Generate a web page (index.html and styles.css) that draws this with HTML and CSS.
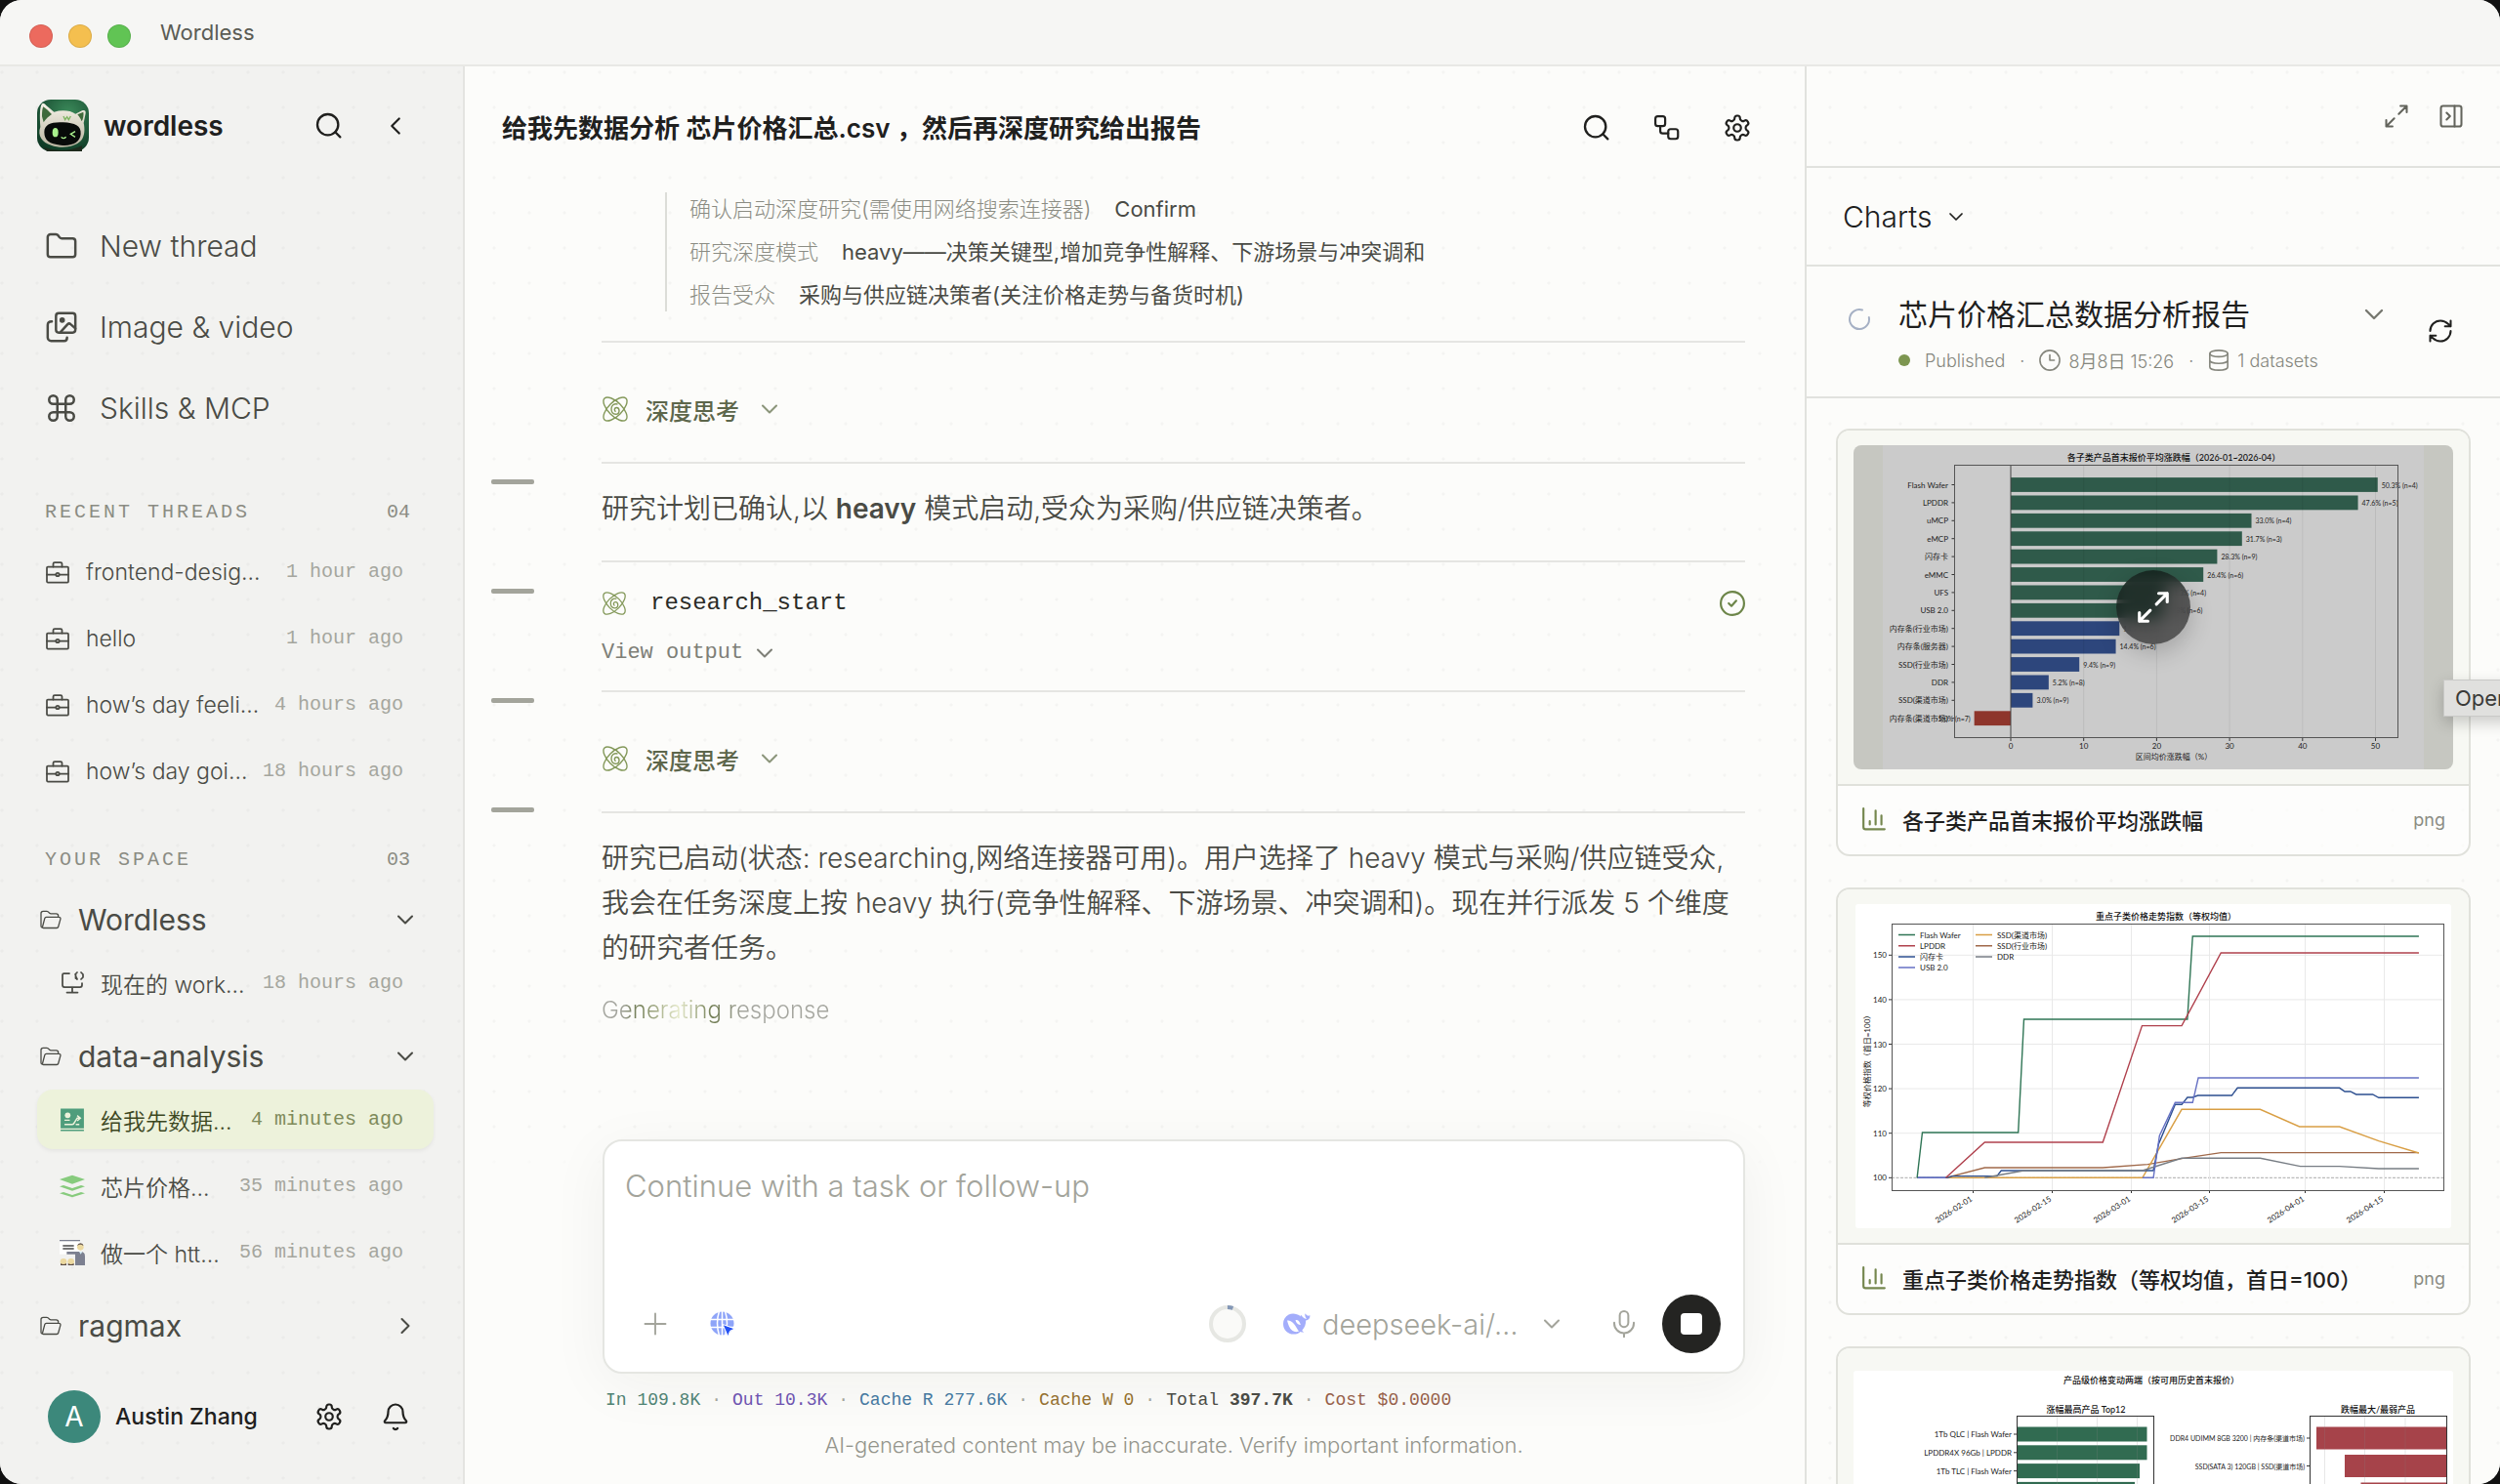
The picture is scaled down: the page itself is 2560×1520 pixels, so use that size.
FILE: index.html
```html
<!DOCTYPE html>
<html lang="zh-CN">
<head>
<meta charset="utf-8">
<meta name="viewport" content="width=device-width, initial-scale=1">
<title>Wordless</title>
<link rel="stylesheet" href="styles.css">
</head>
<body>
<svg class="sprite" aria-hidden="true">
  <symbol id="i-search" viewBox="0 0 24 24"><circle cx="11" cy="11" r="8"/><path d="m20.5 20.5-3.8-3.8"/></symbol>
  <symbol id="i-left" viewBox="0 0 24 24"><path d="m15 18-6-6 6-6"/></symbol>
  <symbol id="i-right" viewBox="0 0 24 24"><path d="m9 18 6-6-6-6"/></symbol>
  <symbol id="i-down" viewBox="0 0 24 24"><path d="m6 9 6 6 6-6"/></symbol>
  <symbol id="i-gear" viewBox="0 0 24 24"><path d="M12.22 2h-.44a2 2 0 0 0-2 2v.18a2 2 0 0 1-1 1.73l-.43.25a2 2 0 0 1-2 0l-.15-.08a2 2 0 0 0-2.73.73l-.22.38a2 2 0 0 0 .73 2.73l.15.1a2 2 0 0 1 1 1.72v.51a2 2 0 0 1-1 1.74l-.15.09a2 2 0 0 0-.73 2.73l.22.38a2 2 0 0 0 2.73.73l.15-.08a2 2 0 0 1 2 0l.43.25a2 2 0 0 1 1 1.73V20a2 2 0 0 0 2 2h.44a2 2 0 0 0 2-2v-.18a2 2 0 0 1 1-1.73l.43-.25a2 2 0 0 1 2 0l.15.08a2 2 0 0 0 2.73-.73l.22-.39a2 2 0 0 0-.73-2.73l-.15-.08a2 2 0 0 1-1-1.74v-.5a2 2 0 0 1 1-1.74l.15-.09a2 2 0 0 0 .73-2.73l-.22-.38a2 2 0 0 0-2.73-.73l-.15.08a2 2 0 0 1-2 0l-.43-.25a2 2 0 0 1-1-1.73V4a2 2 0 0 0-2-2z"/><circle cx="12" cy="12" r="3"/></symbol>
  <symbol id="i-case" viewBox="0 0 24 24"><rect x="1" y="6.500" width="22" height="16" rx="1"/><path d="M7.500 6.500v-3q0-1.500 1.500-1.500h6q1.500 0 1.500 1.500v3M1 14.500h9.400M13.600 14.500H23"/><circle cx="12" cy="14.500" r="1.700"/></symbol>
  <symbol id="i-open" viewBox="0 0 22 20"><path d="M3.500 18.500h13.600c.8 0 1.400-.5 1.600-1.200l2.200-8c.3-1.200-.4-2-1.600-2H6.500c-.8 0-1.500.5-1.700 1.300L2.600 17M3.500 18.500C1.900 18.500 1 17.600 1 16.300V3.500C1 2.200 1.900 1.300 3.200 1.300h3.600c.6 0 1.100.2 1.500.6l1.400 1.400c.4.4.9.600 1.500.6h5.300c1.300 0 2.200.9 2.200 2.200v1.100"/></symbol>
  <symbol id="i-expand" viewBox="0 0 24 24"><path d="M15.500 3H21v5.500M21 3l-7 7M3 21l7-7M8.500 21H3v-5.500"/></symbol>
  <symbol id="i-chart" viewBox="0 0 24 24"><path d="M2 2v17.500a2 2 0 0 0 2 2h18M19 17V8.500M13.500 17V4M8 17v-3"/></symbol>
  <symbol id="i-atom" viewBox="0 0 28 28"><ellipse cx="14" cy="14" rx="15.500" ry="7" transform="rotate(45 14 14)"/><ellipse cx="14" cy="14" rx="15.500" ry="7" transform="rotate(-45 14 14)"/><path d="M16.500 9c-4-1-6.500 1.600-6.500 4.800 0 3.500 2 5.400 4.500 5.400 2.200 0 3.500-1.500 3.500-3.500s-1.200-3.200-2.600-3.200c-1.300 0-2.100 1-2.100 2.200 0 1 .6 1.600 1.400 1.600"/></symbol>
</svg>

<div class="window">
  <header class="titlebar">
    <span class="light light-red"></span><span class="light light-yellow"></span><span class="light light-green"></span>
    <span class="titlebar-name">Wordless</span>
  </header>

  <div class="body">
    <aside class="sidebar">
      <div class="brand">
        <svg class="brand-logo" viewBox="0 0 159 159" aria-hidden="true">
          <defs><radialGradient id="lg" cx=".6" cy=".25" r=".8"><stop offset="0" stop-color="#3b8a5a"/><stop offset="1" stop-color="#0e3a25"/></radialGradient>
          <linearGradient id="hd" x1="0" y1="0" x2="0" y2="1"><stop offset="0" stop-color="#f6f3e8"/><stop offset="1" stop-color="#b9b4a0"/></linearGradient></defs>
          <rect width="159" height="159" rx="42" fill="url(#lg)"/>
          <path d="M10 84C8 50 8 24 14 14c4-5 8-2 14 4l24 20c24-7 50-5 66 6l20-10c8-3 12 0 11 8l-6 30c4 18 4 40-8 54-20 20-60 26-92 14C16 132 0 112 10 84z" fill="url(#hd)"/>
          <path d="M15 52c0-14 1-26 4-30 9 6 18 15 26 23-9 6-18 14-25 25zM124 46l18-8c2 10-1 22-5 29-3-8-8-15-13-21z" fill="#3f6b3c"/>
          <path d="M22 100c0-24 22-32 58-30 36 2 56 10 54 36-2 26-26 38-62 34-34-3-50-14-50-40z" fill="#080b09"/>
          <ellipse cx="56" cy="101" rx="9" ry="14" fill="#a8f08c"/><path d="m117 98-14 8 14 9M74 115q7 8 15 0" fill="none" stroke="#a8f08c" stroke-width="4"/>
          <path d="m81 51 5 11 6-9 5 9 6-11" fill="none" stroke="#7cb55e" stroke-width="4"/><path d="M20 146q60 22 118-4v17H30z" fill="#1d2a1c"/>
        </svg>
        <span class="brand-name">wordless</span>
        <button class="icon-btn" aria-label="Search"><svg class="ico ico-32"><use href="#i-search"/></svg></button>
        <button class="icon-btn" aria-label="Collapse sidebar"><svg class="ico ico-30"><use href="#i-left"/></svg></button>
      </div>

      <nav class="nav">
        <a class="nav-item" href="#new"><svg class="ico ico-34" viewBox="0 0 24 24"><path d="M20 20a2 2 0 0 0 2-2V8.500a2 2 0 0 0-2-2h-7.900a2 2 0 0 1-1.690-.9L9.600 4.400A2 2 0 0 0 7.930 3.500H4a2 2 0 0 0-2 2V18a2 2 0 0 0 2 2Z"/></svg>New thread</a>
        <a class="nav-item" href="#media"><svg class="ico ico-34" viewBox="0 0 24 24"><rect x="8" y="2" width="14" height="14" rx="2"/><circle cx="12.500" cy="7" r="1.100" fill="currentColor"/><path d="m11 16 5.400-6q1.100-1.100 2.200 0L22 13M5 8q-3 0-3 2.500V19.500a2.500 2.500 0 0 0 2.500 2.500H14q2 0 2-2.500"/></svg>Image &amp; video</a>
        <a class="nav-item" href="#skills"><svg class="ico ico-34" viewBox="0 0 24 24"><path d="M15 6v12a3 3 0 1 0 3-3H6a3 3 0 1 0 3 3V6a3 3 0 1 0-3 3h12a3 3 0 1 0-3-3"/></svg>Skills &amp; MCP</a>
      </nav>

      <h2 class="label">RECENT THREADS<span class="count">04</span></h2>
      <div class="rows">
        <a class="row" href="#t1"><svg class="ico ico-24"><use href="#i-case"/></svg><span class="row-name">frontend-desig…</span><time>1 hour ago</time></a>
        <a class="row" href="#t2"><svg class="ico ico-24"><use href="#i-case"/></svg><span class="row-name">hello</span><time>1 hour ago</time></a>
        <a class="row" href="#t3"><svg class="ico ico-24"><use href="#i-case"/></svg><span class="row-name">how’s day feeli…</span><time>4 hours ago</time></a>
        <a class="row" href="#t4"><svg class="ico ico-24"><use href="#i-case"/></svg><span class="row-name">how’s day goi…</span><time>18 hours ago</time></a>
      </div>

      <h2 class="label label-space">YOUR SPACE<span class="count">03</span></h2>
      <section class="folder">
        <button class="folder-head" aria-expanded="true"><svg class="ico ico-folder"><use href="#i-open"/></svg><span class="folder-name">Wordless</span><svg class="ico ico-28"><use href="#i-down"/></svg></button>
        <div class="rows">
          <a class="row row-child" href="#t5"><svg class="ico ico-24" viewBox="0 0 24 24"><path d="M9 2H3.500Q2 2 2 3.500V14q0 2 2 2h16q2 0 2-2v-2M12 16v5M6.500 21.500h11M15.500 3v4M17 1l-2 2M21 1l2 2v3l-2 2M15.500 5 17 8"/></svg><span class="row-name">现在的 work…</span><time>18 hours ago</time></a>
        </div>
      </section>
      <section class="folder">
        <button class="folder-head" aria-expanded="true"><svg class="ico ico-folder"><use href="#i-open"/></svg><span class="folder-name">data-analysis</span><svg class="ico ico-28"><use href="#i-down"/></svg></button>
        <div class="rows">
          <a class="row row-child row-active" href="#t6" aria-current="page"><svg class="pic" viewBox="0 0 72 72"><path fill="#4f9d7c" d="M3 4h66v56H3zM3 64h66v4H3z"/><circle cx="23" cy="23" r="8" fill="#edf2db"/><path d="M14 37h15M14 49h22q4 0 6-5l8-13h6M50 24l9 7-9 8M46 49h10" fill="none" stroke="#edf2db" stroke-width="4"/></svg><span class="row-name">给我先数据…</span><time>4 minutes ago</time></a>
          <a class="row row-child" href="#t7"><svg class="pic" viewBox="0 0 78 72"><path fill="#87cb7d" d="M39 2 78 15 39 29 0 15zM0 37l12-4 27 9 27-9 12 4-39 13zM0 58l12-4 27 9 27-9 12 4-39 12z"/></svg><span class="row-name">芯片价格…</span><time>35 minutes ago</time></a>
          <a class="row row-child" href="#t8"><svg class="pic" viewBox="0 0 78 78"><path fill="#fff" d="M0 4h62v40H0z"/><path fill="#7c8090" d="M0 0h63v4H0zM22 36h42q14 0 14 14v28H48V44H22z"/><circle cx="64" cy="22" r="10" fill="#ecd9a0"/><path d="M54 18q2-8 10-8t10 8q-6-4-10-4t-10 4z" fill="#67594e"/><path d="M10 18h34M10 27h34" stroke="#4a4a4a" stroke-width="4"/><circle cx="12" cy="67" r="10" fill="#ecd9a0"/><circle cx="35" cy="67" r="10" fill="#ecd9a0"/><path d="M3 72q9 6 18 0v6H3zM26 72q9 6 18 0v6H26z" fill="#5a4b45"/><path d="m60 36 5 8 5-8z" fill="#d6ecf6"/></svg><span class="row-name">做一个 htt…</span><time>56 minutes ago</time></a>
        </div>
      </section>
      <section class="folder">
        <button class="folder-head" aria-expanded="false"><svg class="ico ico-folder"><use href="#i-open"/></svg><span class="folder-name">ragmax</span><svg class="ico ico-28"><use href="#i-right"/></svg></button>
      </section>

      <footer class="user">
        <span class="avatar">A</span>
        <span class="user-name">Austin Zhang</span>
        <button class="icon-btn" aria-label="Settings"><svg class="ico ico-30"><use href="#i-gear"/></svg></button>
        <button class="icon-btn" aria-label="Notifications"><svg class="ico ico-30" viewBox="0 0 24 24"><path d="M10.268 21.500a2 2 0 0 0 3.464 0M3.262 15.326A1 1 0 0 0 4 17h16a1 1 0 0 0 .74-1.673C19.410 13.956 18 12.499 18 8A6 6 0 0 0 6 8c0 4.499-1.411 5.956-2.738 7.326"/></svg></button>
      </footer>
    </aside>

    <main class="main">
      <header class="main-head">
        <h1 class="main-title">给我先数据分析 芯片价格汇总.csv ，然后再深度研究给出报告</h1>
        <button class="icon-btn" aria-label="Search in thread"><svg class="ico ico-32"><use href="#i-search"/></svg></button>
        <button class="icon-btn" aria-label="Workflow"><svg class="ico ico-30" viewBox="0 0 24 24"><rect x="2.500" y="2.500" width="8" height="8" rx="2"/><path d="M6.500 10.500v4a2 2 0 0 0 2 2h4.500"/><rect x="13" y="13" width="8" height="8" rx="2"/></svg></button>
        <button class="icon-btn" aria-label="Thread settings"><svg class="ico ico-30"><use href="#i-gear"/></svg></button>
      </header>

      <nav class="ticks" aria-label="Messages"><a href="#m1"></a><a href="#m2"></a><a href="#m3"></a><a href="#m4"></a></nav>

      <div class="chat">
        <section class="msg msg-first">
          <dl class="answers">
            <div><dt>确认启动深度研究(需使用网络搜索连接器)</dt><dd>Confirm</dd></div>
            <div><dt>研究深度模式</dt><dd>heavy——决策关键型,增加竞争性解释、下游场景与冲突调和</dd></div>
            <div><dt>报告受众</dt><dd>采购与供应链决策者(关注价格走势与备货时机)</dd></div>
          </dl>
        </section>
        <section class="msg msg-think"><button class="think" aria-expanded="false"><svg class="atom"><use href="#i-atom"/></svg>深度思考<svg class="ico ico-28"><use href="#i-down"/></svg></button></section>
        <section class="msg msg-text" id="m1"><p>研究计划已确认,以 <strong>heavy</strong> 模式启动,受众为采购/供应链决策者。</p></section>
        <section class="msg msg-tool" id="m2">
          <div class="tool"><svg class="atom"><use href="#i-atom"/></svg><code>research_start</code><svg class="ico tool-ok" viewBox="0 0 24 24" role="img" aria-label="Done"><circle cx="12" cy="12" r="11"/><path d="m8.500 12 2.600 2.500 4.500-5"/></svg></div>
          <button class="view" aria-expanded="false">View output<svg class="ico ico-28"><use href="#i-down"/></svg></button>
        </section>
        <section class="msg msg-think" id="m3"><button class="think" aria-expanded="false"><svg class="atom"><use href="#i-atom"/></svg>深度思考<svg class="ico ico-28"><use href="#i-down"/></svg></button></section>
        <section class="msg msg-text" id="m4">
          <p>研究已启动(状态: researching,网络连接器可用)。用户选择了 heavy 模式与采购/供应链受众,我会在任务深度上按 heavy 执行(竞争性解释、下游场景、冲突调和)。现在并行派发 5 个维度的研究者任务。</p>
          <p class="generating"><span>Generating response</span></p>
        </section>
      </div>

      <div class="dock">
        <form class="composer">
          <textarea aria-label="Message" placeholder="Continue with a task or follow-up"></textarea>
          <div class="controls">
            <button type="button" class="ctl" aria-label="Add"><svg class="ico ico-28" viewBox="0 0 24 24"><path d="M3 12h18M12 3v18"/></svg></button>
            <button type="button" class="ctl ctl-web" aria-label="Web search"><svg class="globe" viewBox="0 0 26 26"><circle cx="12.500" cy="12.500" r="12" fill="#8ea4f8"/><path d="M0 8.500h25M0 16.500h25M9.500 0q-4 12 0 25M15.500 0q4 12 0 25M12.500 0v25" fill="none" stroke="#fff" stroke-width="1.500"/><path d="M13 13.500 25.500 18l-5 2.300L18.500 26z" fill="#2451f4" stroke="#fff" stroke-width="1"/></svg></button>
            <span class="spacer"></span>
            <svg class="ring" viewBox="0 0 38 38" role="img" aria-label="Context used"><circle cx="19" cy="19" r="17" fill="#fafaf8" stroke="#e6e7e3" stroke-width="4"/><path d="M19 2a17 17 0 0 1 5.500.9" fill="none" stroke="#8397b6" stroke-width="4"/></svg>
            <label class="model">
              <svg class="whale" viewBox="0 0 28 22" aria-hidden="true"><path d="M27.500 2.200c-2 1-3.200.3-4.200-1-.6-.8-1-1-1 .4 0 2 .6 3.200 1.800 4-1.800.6-3.600-.6-5.400-3-.8-1-1.300-.4-.6.8-4.500-3.200-9-3.400-12.500-1.800C2 3.500 0 7 0 11c0 6 4.500 10.600 10.500 10.600 3.300 0 5.700-1 7.200-2.600 1.400.7 3 .8 3.600.3-1-.3-1.600-1-1.900-1.900 2.700-2.800 3.800-6.200 3.800-10 2.600-.2 4.300-2 4.300-5.200z" fill="#a3adfb"/><path d="M4 7.500c4-.8 7.500 3 10.500 8.800 1 2 2 2.500 3 1.500-4.500 3-9 1-11.500-4.300C5 11 4.500 9 4 7.500zM12.500 7.200c2.400-.8 4.400 1.200 5.400 4.800-2.600-.2-4.600-1.800-5.400-4.800z" fill="#fff"/></svg>
              <select aria-label="Model"><option>deepseek-ai/…</option></select>
              <svg class="ico ico-28"><use href="#i-down"/></svg>
            </label>
            <button type="button" class="ctl ctl-mic" aria-label="Dictate"><svg class="ico ico-30" viewBox="0 0 24 24"><rect x="8.500" y="1.500" width="7" height="13" rx="3.500"/><path d="M4 11v.5a8 8 0 0 0 16 0V11M12 19.500v3"/></svg></button>
            <button type="button" class="stop" aria-label="Stop"><span></span></button>
          </div>
        </form>
        <div class="stats"><span class="s-in">In 109.8K</span><i>·</i><span class="s-out">Out 10.3K</span><i>·</i><span class="s-read">Cache R 277.6K</span><i>·</i><span class="s-write">Cache W 0</span><i>·</i><span class="s-total">Total <b>397.7K</b></span><i>·</i><span class="s-cost">Cost $0.0000</span></div>
        <p class="disclaimer">AI-generated content may be inaccurate. Verify important information.</p>
      </div>
    </main>

    <aside class="panel">
      <div class="panel-bar">
        <button class="icon-btn" aria-label="Expand panel"><svg class="ico ico-28"><use href="#i-expand"/></svg></button>
        <button class="icon-btn" aria-label="Close panel"><svg class="ico ico-28" viewBox="0 0 24 24"><rect x="3" y="3" width="18" height="18" rx="2"/><path d="M15 3v18M8 9l3 3-3 3"/></svg></button>
      </div>
      <label class="panel-view"><select aria-label="View"><option>Charts</option></select><svg class="ico ico-24"><use href="#i-down"/></svg></label>
      <div class="report">
        <svg class="ico spin" viewBox="0 0 24 24"><path d="M15 2.500A10 10 0 1 0 21.800 10"/></svg>
        <div class="report-text">
          <h2>芯片价格汇总数据分析报告</h2>
          <p class="meta"><span class="dot"></span><span class="pub">Published</span><i>·</i><svg class="ico ico-22" viewBox="0 0 24 24"><circle cx="12" cy="12" r="11"/><path d="M12 6v6h5"/></svg><span>8月8日 15:26</span><i>·</i><svg class="ico ico-22" viewBox="0 0 24 24"><ellipse cx="12" cy="4.500" rx="10" ry="3.500"/><path d="M2 4.500v15c0 2 4.500 3.500 10 3.500s10-1.500 10-3.500v-15M2 12c0 2 4.500 3.500 10 3.500s10-1.500 10-3.500"/></svg><span>1 datasets</span></p>
        </div>
        <button class="icon-btn report-more" aria-label="More"><svg class="ico ico-32"><use href="#i-down"/></svg></button>
        <button class="icon-btn report-refresh" aria-label="Refresh"><svg class="ico ico-28" viewBox="0 0 24 24"><path d="M3 12a9 9 0 0 1 9-9 9.750 9.750 0 0 1 6.740 2.740L21 8M21 3v5h-5M21 12a9 9 0 0 1-9 9 9.750 9.750 0 0 1-6.740-2.740L3 16M8 16H3v5"/></svg></button>
      </div>

      <div class="cards">
        <figure class="card">
          <div class="shot">
            <svg class="chart chart-dim" viewBox="0 0 614 332" id="bars"><rect x="30" width="554" height="332" fill="#cbcbcb"/></svg>
            <button class="zoom" aria-label="Open chart"><svg class="ico zoom-ico"><use href="#i-expand"/></svg></button>
            <span class="tip" role="tooltip">Open</span>
          </div>
          <figcaption><svg class="ico ico-26"><use href="#i-chart"/></svg><span>各子类产品首末报价平均涨跌幅</span><small>png</small></figcaption>
        </figure>
        <figure class="card">
          <div class="shot shot-line">
            <svg class="chart" viewBox="0 0 610 332" id="lines"></svg>
          </div>
          <figcaption><svg class="ico ico-26"><use href="#i-chart"/></svg><span>重点子类价格走势指数（等权均值，首日=100）</span><small>png</small></figcaption>
        </figure>
        <figure class="card">
          <div class="shot shot-wide">
            <svg class="chart" viewBox="0 0 614 316" id="ends"></svg>
          </div>
        </figure>
      </div>
    </aside>
  </div>
</div>
<script src="charts.js"></script>
</body>
</html>
```
FILE: styles.css
```css
* { box-sizing: border-box; }

body {
  margin: 0;
  background: #111;
  color: #4a4b45;
  font-family: Inter, "Noto Sans CJK SC", sans-serif;
  font-size: 24px;
  font-weight: 400;
}

h1, h2, p, dl, dd, figure { margin: 0; }
a { color: inherit; text-decoration: none; }
i { font-style: normal; }

button, select, textarea {
  margin: 0;
  padding: 0;
  border: 0;
  background: none;
  color: inherit;
  font: inherit;
  appearance: none;
  outline: none;
}

.sprite { position: absolute; width: 0; height: 0; }

.ico {
  flex: none;
  display: block;
  fill: none;
  stroke: currentColor;
  stroke-width: 1.75;
  stroke-linecap: round;
  stroke-linejoin: round;
}
.ico-22 { width: 22px; height: 22px; }
.ico-24 { width: 24px; height: 24px; }
.ico-26 { width: 26px; height: 26px; }
.ico-28 { width: 28px; height: 28px; }
.ico-30 { width: 30px; height: 30px; }
.ico-32 { width: 32px; height: 32px; }
.ico-34 { width: 34px; height: 34px; }
.ico-folder { width: 22px; height: 20px; stroke-width: 1.3; }
.pic { flex: none; width: 26px; height: 26px; margin: 0 -1px; }

.icon-btn {
  flex: none;
  display: grid;
  place-items: center;
  width: 48px;
  height: 48px;
}

/* window */
.window {
  display: flex;
  flex-direction: column;
  height: 100vh;
  border-radius: 22px;
  overflow: hidden;
  background: #fcfcfa;
}
.titlebar {
  flex: none;
  display: flex;
  align-items: center;
  gap: 16px;
  height: 68px;
  padding: 8px 30px 0;
  border-bottom: 2px solid #e8e8e5;
  background: #f6f6f4;
}
.light { width: 24px; height: 24px; border-radius: 50%; border: 1px solid rgba(0, 0, 0, .1); }
.light-red { background: #ec6a5e; }
.light-yellow { background: #f4bf4f; }
.light-green { background: #61c454; }
.titlebar-name { margin: 0 0 8px 14px; color: #5b5c55; font-size: 22px; }

.body {
  flex: 1;
  min-height: 0;
  display: flex;
}

/* sidebar */
.sidebar {
  flex: none;
  display: flex;
  flex-direction: column;
  width: 476px;
  padding: 34px 30px 42px 38px;
  border-right: 2px solid #e4e4e1;
  background: radial-gradient(circle at 2px 6px, #ebebe9 1px, transparent 2px) 0 0 / 36px 36px #f2f2f0;
}
.brand, .user { display: flex; align-items: center; gap: 20px; color: #20201e; }
.brand { padding-right: 15px; }
.brand-logo { width: 53px; height: 53px; }
.brand-name { flex: 1; margin-left: -5px; font-size: 28px; font-weight: 600; }

.nav { display: flex; flex-direction: column; gap: 19px; margin: 65px 0 63px; }
.nav-item {
  display: flex;
  align-items: center;
  gap: 22px;
  height: 64px;
  padding-left: 8px;
  font-size: 30px;
  font-weight: 300;
}

.label {
  display: flex;
  justify-content: space-between;
  margin: 0 0 18px;
  padding: 0 24px 0 8px;
  color: #8b8c83;
  font: 400 20px/24px "Liberation Mono", monospace;
  letter-spacing: 3px;
}
.label-space { margin: 49px 0 19px; }
.count { letter-spacing: 0; }

.rows { display: flex; flex-direction: column; gap: 7px; }
.row {
  display: flex;
  align-items: center;
  gap: 17px;
  height: 61px;
  padding: 0 31px 0 9px;
  border-radius: 16px;
  font-size: 23px;
  font-weight: 350;
}
.row-child { padding-left: 24px; }
.row-name { flex: 1; min-width: 0; white-space: nowrap; }
.row time { flex: none; color: #a5a69e; font: 400 20px/24px "Liberation Mono", monospace; }
.row-active { background: #edf2db; box-shadow: 0 2px 4px rgba(0, 0, 0, .06); color: #3c471f; }
.row-active time { color: #7e8a5a; }

.folder + .folder { margin-top: 15px; }
.folder-head {
  display: flex;
  align-items: center;
  gap: 17px;
  width: 100%;
  height: 60px;
  margin-bottom: 4px;
  padding: 0 15px 0 3px;
  text-align: left;
}
.folder-name { flex: 1; font-size: 30px; }

.user { gap: 20px; margin-top: auto; padding: 0 15px 0 11px; }
.avatar {
  display: grid;
  place-items: center;
  width: 54px;
  height: 54px;
  margin-right: -5px;
  border-radius: 50%;
  background: #3c887b;
  color: #fff;
  font-size: 28px;
}
.user-name { flex: 1; font-size: 23px; font-weight: 500; white-space: nowrap; }

/* conversation */
.main {
  flex: 1;
  min-width: 0;
  position: relative;
  display: flex;
  flex-direction: column;
  background: radial-gradient(circle at 30px 6px, #f4f4f2 1px, transparent 2px) 0 0 / 36px 36px #fcfcfa;
}
.main-head {
  flex: none;
  display: flex;
  align-items: center;
  gap: 24px;
  height: 129px;
  padding: 0 45px 3px 38px;
  color: #20201e;
}
.main-title { flex: 1; padding-bottom: 4px; font-size: 26px; font-weight: 600; }

.ticks {
  position: absolute;
  left: 27px;
  top: 423px;
  display: flex;
  flex-direction: column;
  gap: 107px;
}
.ticks a { width: 44px; height: 5px; border-radius: 2px; background: #a3a49b; }

.chat { flex: 1; min-height: 0; overflow: hidden; padding: 0 61px 0 140px; }
.msg { border-top: 2px solid #e5e5e2; }
.msg-first { border: 0; padding: 0 0 30px 65px; }
.answers {
  display: flex;
  flex-direction: column;
  gap: 10px;
  padding-left: 23px;
  border-left: 2px solid #dcddd8;
  font-size: 22px;
  line-height: 34px;
}
.answers div { display: flex; gap: 24px; }
.answers dt { color: #8b8c83; font-weight: 300; }

.msg-think { padding: 50px 0 36px; }
.think {
  display: flex;
  align-items: center;
  gap: 17px;
  height: 36px;
  color: #5d664b;
  font-weight: 500;
}
.think .ico { color: #8b957a; }
.atom { flex: none; width: 28px; height: 28px; fill: none; stroke: #84995a; stroke-width: 1.4; }

.msg-text { padding: 23px 0 30px; font-size: 28px; line-height: 46px; font-weight: 350; }
.msg-text strong { font-weight: 600; }

.msg-tool { display: flex; flex-direction: column; gap: 15px; padding: 24px 0 20px; }
.tool { display: flex; align-items: center; gap: 24px; height: 36px; }
.tool .atom { width: 26px; height: 26px; }
.tool code { flex: 1; color: #2a2b27; font: 400 24px/36px "Liberation Mono", monospace; }
.tool-ok { width: 26px; height: 26px; color: #6c8548; stroke-width: 2; }
.view {
  display: flex;
  align-items: center;
  gap: 8px;
  height: 36px;
  color: #7e7f77;
  font: 400 22px/36px "Liberation Mono", monospace;
}

.generating { margin-top: 23px; font-size: 24px; line-height: 36px; font-weight: 300; }
.generating span {
  background: linear-gradient(90deg, #a5a69f 8%, #6f7b52 16%, #e6eacb 34%, #6f7b52 49%, #a5a69f 62%);
  -webkit-background-clip: text;
  background-clip: text;
  color: transparent;
}

/* composer */
.dock { flex: none; padding: 0 61px 24px 141px; background: linear-gradient(rgba(252, 252, 250, 0), #fcfcfa 10%); }
.composer {
  display: flex;
  flex-direction: column;
  height: 240px;
  padding: 26px 23px 19px 21px;
  border: 2px solid #e5e6e2;
  border-radius: 20px;
  background: #fff;
  box-shadow: 0 12px 60px rgba(30, 30, 20, .05);
}
.composer textarea {
  flex: 1;
  width: 100%;
  resize: none;
  font-size: 31px;
  font-weight: 350;
  line-height: 40px;
}
.composer textarea::placeholder { color: #a3a49b; opacity: 1; }
.controls { display: flex; align-items: center; height: 60px; padding-left: 11px; color: #a3a49b; }
.ctl { display: grid; place-items: center; width: 40px; height: 40px; }
.ctl .ico { stroke-width: 1.6; }
.ctl-web { margin-left: 29px; }
.globe { width: 26px; height: 26px; }
.spacer { flex: 1; }
.ring { width: 38px; height: 38px; margin-right: 38px; }
.model { display: flex; align-items: center; gap: 12px; }
.model select { font-size: 29px; font-weight: 350; }
.model .ico { margin-left: 8px; }
.whale { width: 28px; height: 22px; }
.ctl-mic { margin: 0 19px 0 40px; }
.stop {
  display: grid;
  place-items: center;
  width: 60px;
  height: 60px;
  border-radius: 50%;
  background: #242422;
}
.stop span { width: 22px; height: 22px; border-radius: 4px; background: #fff; }

.stats {
  display: flex;
  gap: 11px;
  margin-top: 13px;
  padding-left: 3px;
  color: #a3a49b;
  font: 400 18px/28px "Liberation Mono", monospace;
  white-space: nowrap;
}
.s-in { color: #4f8273; }
.s-out { color: #6d53b0; }
.s-read { color: #45789f; }
.s-write { color: #94702f; }
.s-total { color: #4a4b45; }
.s-cost { color: #96604a; }
.disclaimer { margin-top: 16px; color: #94958c; font-size: 22px; line-height: 32px; font-weight: 300; text-align: center; }

/* charts panel */
.panel {
  flex: none;
  display: flex;
  flex-direction: column;
  width: 712px;
  border-left: 2px solid #e1e2de;
  background: radial-gradient(circle at 6px 6px, #f4f4f2 1px, transparent 2px) 18px 0 / 36px 36px #fcfcfa;
}
.panel-bar {
  flex: none;
  display: flex;
  justify-content: flex-end;
  align-items: center;
  gap: 8px;
  height: 104px;
  padding-right: 26px;
  border-bottom: 2px solid #e1e2de;
  color: #63645c;
}
.panel-view {
  flex: none;
  display: flex;
  align-items: center;
  gap: 12px;
  height: 101px;
  padding-left: 37px;
  border-bottom: 2px solid #e1e2de;
  color: #20201e;
  font-size: 30px;
  font-weight: 350;
}
.report {
  flex: none;
  display: flex;
  align-items: flex-start;
  height: 135px;
  padding: 25px 37px 0 42px;
  border-bottom: 2px solid #e1e2de;
  background: #fcfcfa;
}
.spin { width: 24px; height: 24px; margin: 17px 28px 0 0; color: #a5b0c4; stroke-width: 2; }
.report-text { flex: 1; min-width: 0; }
.report h2 { color: #20201e; font-size: 30px; line-height: 48px; font-weight: 400; }
.meta { display: flex; align-items: center; gap: 8px; height: 24px; margin-top: 11px; color: #85867d; font-size: 18px; font-weight: 350; }
.meta i { margin: 0 7px; }
.dot { width: 12px; height: 12px; margin-right: 7px; border-radius: 50%; background: #7d9650; }
.report-more { color: #76776f; }
.report-refresh { margin: 17px 0 0 20px; color: #20201e; }

.cards { flex: 1; min-height: 0; overflow: hidden; display: flex; flex-direction: column; gap: 32px; padding: 31px 30px 0; }
.card { flex: none; border: 2px solid #e0e1db; border-radius: 14px; background: rgba(253, 253, 252, .7); }
.shot { position: relative; padding: 15px 16px; border-bottom: 2px solid #e0e1db; border-radius: 12px 12px 0 0; background: #f7f8f3; }
.shot-line { padding: 15px 18px; }
.shot-wide { padding: 23px 16px; }
.chart { display: block; width: 100%; border-radius: 3px; background: #fff; font-family: Lato, "Noto Sans CJK SC", sans-serif; }
.chart-dim { border-radius: 8px; background: #c6c7c1; }
.card figcaption { display: flex; align-items: center; gap: 16px; height: 70px; padding: 0 24px 2px; color: #20201e; font-size: 22px; font-weight: 500; }
.card figcaption .ico { color: #75874f; stroke-width: 2; }
.card figcaption span { flex: 1; }
.card small { color: #8b8c83; font-size: 18px; font-weight: 400; }

.zoom {
  position: absolute;
  inset: 0;
  display: grid;
  place-items: center;
  width: 76px;
  height: 76px;
  margin: auto;
  border-radius: 50%;
  background: rgba(0, 0, 0, .57);
  backdrop-filter: blur(8px);
  box-shadow: 0 8px 24px rgba(0, 0, 0, .2);
  color: #fff;
}
.zoom-ico { width: 38px; height: 38px; stroke-width: 2; }
.tip {
  position: absolute;
  left: 620px;
  top: 255px;
  width: 130px;
  padding: 0 11px;
  border: 1px solid #c9c9c7;
  background: #e0e0de;
  box-shadow: 0 6px 16px rgba(0, 0, 0, .2);
  color: #3a3a38;
  font-size: 22px;
  line-height: 36px;
}
```
FILE: charts.js
```js
const NS = 'http://www.w3.org/2000/svg';

function add(parent, tag, attrs, text) {
  const el = document.createElementNS(NS, tag);
  for (const k in attrs) el.setAttribute(k, attrs[k]);
  if (text !== undefined) el.textContent = text;
  parent.appendChild(el);
  return el;
}

function label(svg, x, y, text, size, anchor, extra) {
  return add(svg, 'text', Object.assign({
    x, y, 'font-size': size, 'text-anchor': anchor, 'dominant-baseline': 'central', fill: '#222'
  }, extra), text);
}

function line(svg, x1, y1, x2, y2, stroke, width, extra) {
  add(svg, 'line', Object.assign({ x1, y1, x2, y2, stroke, 'stroke-width': width }, extra));
}

/* average change per category */
(function () {
  const svg = document.getElementById('bars');
  const green = '#2f5a4a', blue = '#2d467c', red = '#8e352b';
  const rows = [
    ['Flash Wafer', 50.3, 4, green], ['LPDDR', 47.6, 5, green], ['uMCP', 33.0, 4, green],
    ['eMCP', 31.7, 3, green], ['闪存卡', 28.3, 9, green], ['eMMC', 26.4, 6, green],
    ['UFS', 21.3, 4, green], ['USB 2.0', 20.8, 6, green], ['内存条(行业市场)', 14.9, 6, blue],
    ['内存条(服务器)', 14.4, 6, blue], ['SSD(行业市场)', 9.4, 9, blue], ['DDR', 5.2, 8, blue],
    ['SSD(渠道市场)', 3.0, 9, blue], ['内存条(渠道市场)', -5.0, 7, red]
  ];
  const zero = 161, unit = 7.47;
  label(svg, 328, 12, '各子类产品首末报价平均涨跌幅（2026-01~2026-04）', 9, 'middle', { 'font-weight': 500, fill: '#111' });
  rows.forEach(function (r, i) {
    const y = 40.5 + i * 18.4;
    const w = Math.abs(r[1]) * unit;
    add(svg, 'rect', { x: r[1] < 0 ? zero - w : zero, y: y - 7.4, width: w, height: 14.8, fill: r[3] });
    line(svg, 100.5, y, 103.5, y, '#333', 1);
    label(svg, 97, y, r[0], 8, 'end');
    const text = r[1].toFixed(1) + '% (n=' + r[2] + ')';
    if (r[1] < 0) label(svg, zero - w - 4, y, text, 7, 'end');
    else label(svg, zero + w + 4, y, text, 7, 'start');
  });
  [0, 10, 20, 30, 40, 50].forEach(function (v) {
    const x = zero + v * unit;
    if (v) line(svg, x, 20.5, x, 299.5, '#000', 1, { 'stroke-opacity': .07 });
    line(svg, x, 299.5, x, 303, '#333', 1);
    label(svg, x, 308, v, 8, 'middle');
  });
  line(svg, zero, 20.5, zero, 299.5, '#444', 1);
  add(svg, 'rect', { x: 103.5, y: 20.5, width: 454, height: 279, fill: 'none', stroke: '#555', 'stroke-width': 1 });
  label(svg, 328, 319, '区间均价涨跌幅（%）', 8, 'middle');
})();

/* price index by category */
(function () {
  const svg = document.getElementById('lines');
  label(svg, 318, 12, '重点子类价格走势指数（等权均值）', 9, 'middle', { 'font-weight': 500, fill: '#111' });
  [150, 140, 130, 120, 110, 100].forEach(function (v, i) {
    const y = 52.3 + i * 45.6;
    if (v > 100) line(svg, 37, y, 602, y, '#e9e9e9', 1);
    else line(svg, 37, y, 602, y, '#aaa', 1, { 'stroke-dasharray': '3 1.500' });
    line(svg, 34, y, 37, y, '#333', 1);
    label(svg, 32, y, v, 8, 'end');
  });
  const dates = { '2026-02-01': 120.5, '2026-02-15': 201.5, '2026-03-01': 282.5, '2026-03-15': 362.5, '2026-04-01': 460.5, '2026-04-15': 541.5 };
  Object.keys(dates).forEach(function (d) {
    const x = dates[d];
    line(svg, x, 21, x, 293, '#e9e9e9', 1);
    line(svg, x, 293, x, 296, '#333', 1);
    label(svg, x - 2, 301, d, 8, 'end', { transform: 'rotate(-33 ' + (x - 2) + ' 301)' });
  });
  /* plot units: 2.24 per px across, 3 per px down */
  const plot = add(svg, 'g', { transform: 'translate(-40 -26) scale(.4464 .3333)', fill: 'none', 'stroke-width': 1.4 });
  [
    ['#a0694a', '297,919 386,888 657,888 760,878 838,860 928,842 1382,842'],
    ['#d99f45', '297,919 748,919 838,709 1018,709 1108,762 1200,762 1290,806 1382,843'],
    ['#2d4f90', '231,919 300,919 312,914 414,914 424,897 773,897 785,815 823,694 838,694 851,672 863,672 875,666 953,666 966,643 1200,643 1212,654 1225,654 1238,663 1276,663 1290,673 1382,673'],
    ['#777d84', '386,919 476,897 748,897 838,859 1018,859 1110,884 1200,884 1290,891 1382,891'],
    ['#6671c4', '231,919 297,919 M 748,919 773,919 787,790 823,688 863,688 876,612 1382,612'],
    ['#2f7555', '231,919 243,780 463,780 476,432 851,432 863,177 1382,177'],
    ['#b0414d', '297,919 386,810 657,810 747,452 838,452 928,228 1382,228']
  ].forEach(function (s) {
    add(plot, 'path', { d: 'M ' + s[1], stroke: s[0], 'vector-effect': 'non-scaling-stroke' });
  });
  add(svg, 'rect', { x: 37.5, y: 20.5, width: 565, height: 273, fill: 'none', stroke: '#555', 'stroke-width': 1 });
  [
    ['Flash Wafer', '#2f7555', 0, 0], ['LPDDR', '#b0414d', 0, 1], ['闪存卡', '#2d4f90', 0, 2], ['USB 2.0', '#6671c4', 0, 3],
    ['SSD(渠道市场)', '#d99f45', 1, 0], ['SSD(行业市场)', '#a0694a', 1, 1], ['DDR', '#777d84', 1, 2]
  ].forEach(function (k) {
    const x = 44 + k[2] * 79, y = 31.5 + k[3] * 11.2;
    line(svg, x, y, x + 17, y, k[1], 1.5);
    label(svg, x + 22, y, k[0], 8, 'start');
  });
  label(svg, 12, 159, '等权价格指数（首日=100）', 8, 'middle', { transform: 'rotate(-90 12 159)' });
})();

/* products at both ends of the range */
(function () {
  const svg = document.getElementById('ends');
  const green = '#316b51', red = '#a6434a';
  label(svg, 305, 9, '产品级价格变动两端（按可用历史首末报价）', 9, 'middle', { 'font-weight': 500, fill: '#111' });
  label(svg, 238, 39, '涨幅最高产品 Top12', 9, 'middle', { 'font-weight': 500, fill: '#111' });
  label(svg, 537, 39, '跌幅最大/最弱产品', 9, 'middle', { 'font-weight': 500, fill: '#111' });
  [['1Tb QLC | Flash Wafer', 133.5], ['LPDDR4X 96Gb | LPDDR', 133.5], ['1Tb TLC | Flash Wafer', 126], ['', 121]].forEach(function (r, i) {
    const y = 65 + i * 18.8;
    add(svg, 'rect', { x: 167, y: y - 7.5, width: r[1], height: 15, fill: green });
    line(svg, 164, y, 167, y, '#333', 1);
    if (r[0]) label(svg, 162, y, r[0], 8, 'end');
  });
  [['DDR4 UDIMM 8GB 3200 | 内存条(渠道市场)', 133.5], ['SSD(SATA 3) 120GB | SSD(渠道市场)', 104.5], ['', 88]].forEach(function (r, i) {
    const y = 69 + i * 28.5;
    add(svg, 'rect', { x: 607.5 - r[1], y: y - 11.5, width: r[1], height: 23, fill: red });
    line(svg, 464, y, 467, y, '#333', 1);
    if (r[0]) label(svg, 462, y, r[0], 7, 'end');
  });
  [208.5, 249.5, 290.5, 482.5, 523.5, 565].forEach(function (x) { line(svg, x, 46, x, 290, '#888', 1, { 'stroke-opacity': .2 }); });
  add(svg, 'rect', { x: 167.5, y: 46.5, width: 140, height: 244, fill: 'none', stroke: '#333', 'stroke-width': 1 });
  add(svg, 'rect', { x: 467.5, y: 46.5, width: 140, height: 244, fill: 'none', stroke: '#333', 'stroke-width': 1 });
})();
```
